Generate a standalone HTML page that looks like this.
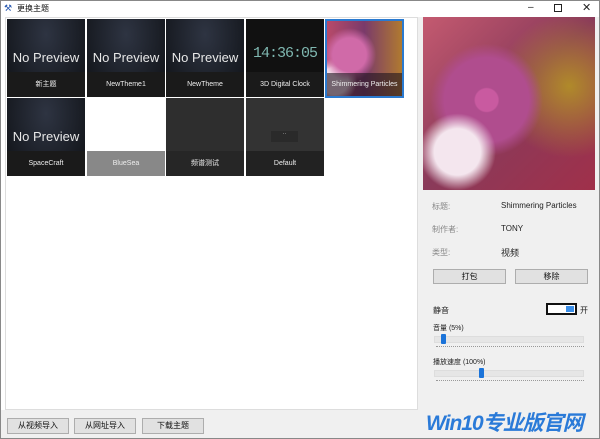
<!DOCTYPE html>
<html><head><meta charset="utf-8"><style>
*{margin:0;padding:0;box-sizing:border-box}
html,body{width:600px;height:439px;overflow:hidden}
body{background:#fff;font-family:"Liberation Sans","Noto Sans CJK SC",sans-serif;position:relative}
.a{position:absolute}
.tile{position:absolute;width:78px;height:78px;background:radial-gradient(ellipse at 50% 20%,#2e3442,#15181e 80%);color:#eee;overflow:hidden}
.tile .np{position:absolute;top:31px;width:100%;text-align:center;font-size:13px;color:#e8e8e8;white-space:nowrap}
.tile .cap{position:absolute;bottom:0;height:25px;width:100%;background:#1a1a1a;font-size:7px;text-align:center;line-height:25px;color:#eee;white-space:nowrap}
.btn{position:absolute;background:#e1e1e1;border:1px solid #adadad;font-size:8px;text-align:center;color:#111}
.lbl{position:absolute;font-size:8px;color:#888}
.val{position:absolute;font-size:8px;color:#222;white-space:nowrap}
.track{position:absolute;height:7px;background:#e6e6e6;border:1px solid #ddd}
.ticks{position:absolute;height:1px;border-top:1px dotted #999}
.thumb{position:absolute;width:5px;height:10px;background:#1a73d9;border-radius:1px}
</style></head><body>
<div class="a" style="left:0;top:0;width:600px;height:439px;border:1px solid #888;z-index:5;pointer-events:none"></div>
<div class="a" style="left:4px;top:3px;width:10px;height:10px;color:#2a5ab0;font-size:9px;line-height:10px">⚒</div>
<div class="a" style="left:17px;top:3px;font-size:8px;color:#111">更换主题</div>
<div class="a" style="left:528px;top:2px;font-size:10px;color:#222">–</div>
<div class="a" style="left:554px;top:4px;width:8px;height:8px;border:1px solid #222"></div>
<div class="a" style="left:582px;top:1px;font-size:11px;color:#222">✕</div>
<div class="a" style="left:5px;top:17px;width:413px;height:393px;background:#fff;border:1px solid #ddd"></div>
<div class="tile" style="left:7px;top:19px"><div class="np">No Preview</div><div class="cap">新主题</div></div>
<div class="tile" style="left:87px;top:19px"><div class="np">No Preview</div><div class="cap">NewTheme1</div></div>
<div class="tile" style="left:166px;top:19px"><div class="np">No Preview</div><div class="cap">NewTheme</div></div>
<div class="tile" style="left:246px;top:19px;background:#111"><div class="np" style="font-family:'Liberation Mono',monospace;color:#7fb7b0;font-size:15px;top:26px;letter-spacing:-1px">14:36:05</div><div class="cap">3D Digital Clock</div></div>
<div class="tile" style="left:325px;top:19px;width:79px;height:79px;border:2px solid #2a7ad0;background:radial-gradient(circle at 30% 45%,#d06aa8 0 25%,transparent 40%),radial-gradient(circle at 10% 80%,#f4dde8 0 15%,transparent 25%),linear-gradient(90deg,#b84a6a,#7a3a6a 50%,#b07a30)"><div class="cap" style="background:rgba(30,20,30,.6);height:23px;line-height:23px">Shimmering Particles</div></div>
<div class="tile" style="left:7px;top:98px"><div class="np">No Preview</div><div class="cap">SpaceCraft</div></div>
<div class="tile" style="left:87px;top:98px;background:#fff"><div class="cap" style="background:#888">BlueSea</div></div>
<div class="tile" style="left:166px;top:98px;background:#2e2e2e"><div class="cap" style="background:#262626">频谱测试</div></div>
<div class="tile" style="left:246px;top:98px;background:#333"><div class="a" style="left:25px;top:33px;width:27px;height:11px;background:#2a2a2a;color:#ccc;font-size:6px;text-align:center">··</div><div class="cap" style="background:#222">Default</div></div>
<div class="a" style="left:418px;top:17px;width:181px;height:393px;background:#f0f0f0"></div>
<div class="a" style="left:423px;top:17px;width:172px;height:173px;background:radial-gradient(circle at 20% 78%,#f4e6ee 0 12%,transparent 20%),radial-gradient(circle at 37% 48%,#c95aa0 0 8%,#b04d8e 9% 30%,transparent 40%),radial-gradient(circle at 85% 40%,#b08a2a,transparent 40%),linear-gradient(135deg,#c45a70,#8a3a5a 50%,#a0304a)"></div>
<div class="lbl" style="left:432px;top:201px">标题:</div><div class="val" style="left:501px;top:201px">Shimmering Particles</div>
<div class="lbl" style="left:432px;top:224px">制作者:</div><div class="val" style="left:501px;top:224px">TONY</div>
<div class="lbl" style="left:432px;top:247px">类型:</div><div class="val" style="left:501px;top:246px;font-size:9px">视频</div>
<div class="btn" style="left:433px;top:269px;width:73px;height:15px;line-height:13px">打包</div>
<div class="btn" style="left:515px;top:269px;width:73px;height:15px;line-height:13px">移除</div>
<div class="val" style="left:433px;top:305px">静音</div>
<div class="a" style="left:546px;top:303px;width:31px;height:12px;border:2px solid #111;background:#fff"><div class="a" style="right:1px;top:1px;width:8px;height:6px;background:#3a8ee8"></div></div>
<div class="val" style="left:580px;top:305px">开</div>
<div class="val" style="left:433px;top:323px;font-size:7px">音量 (5%)</div>
<div class="track" style="left:434px;top:336px;width:150px"></div><div class="ticks" style="left:436px;top:346px;width:148px"></div><div class="thumb" style="left:441px;top:334px"></div>
<div class="val" style="left:433px;top:357px;font-size:7px">播放速度 (100%)</div>
<div class="track" style="left:434px;top:370px;width:150px"></div><div class="ticks" style="left:436px;top:380px;width:148px"></div><div class="thumb" style="left:479px;top:368px"></div>
<div class="a" style="left:0;top:410px;width:600px;height:29px;background:#f0f0f0"></div>
<div class="btn" style="left:7px;top:418px;width:62px;height:16px;line-height:14px">从视频导入</div>
<div class="btn" style="left:74px;top:418px;width:62px;height:16px;line-height:14px">从网址导入</div>
<div class="btn" style="left:142px;top:418px;width:62px;height:16px;line-height:14px">下载主题</div>
<div class="a" style="left:426px;top:412px;font-size:21px;line-height:24px;font-weight:bold;font-style:italic;color:#2a7ad8;letter-spacing:-1px;white-space:nowrap">Win10专业版官网</div>
</body></html>
